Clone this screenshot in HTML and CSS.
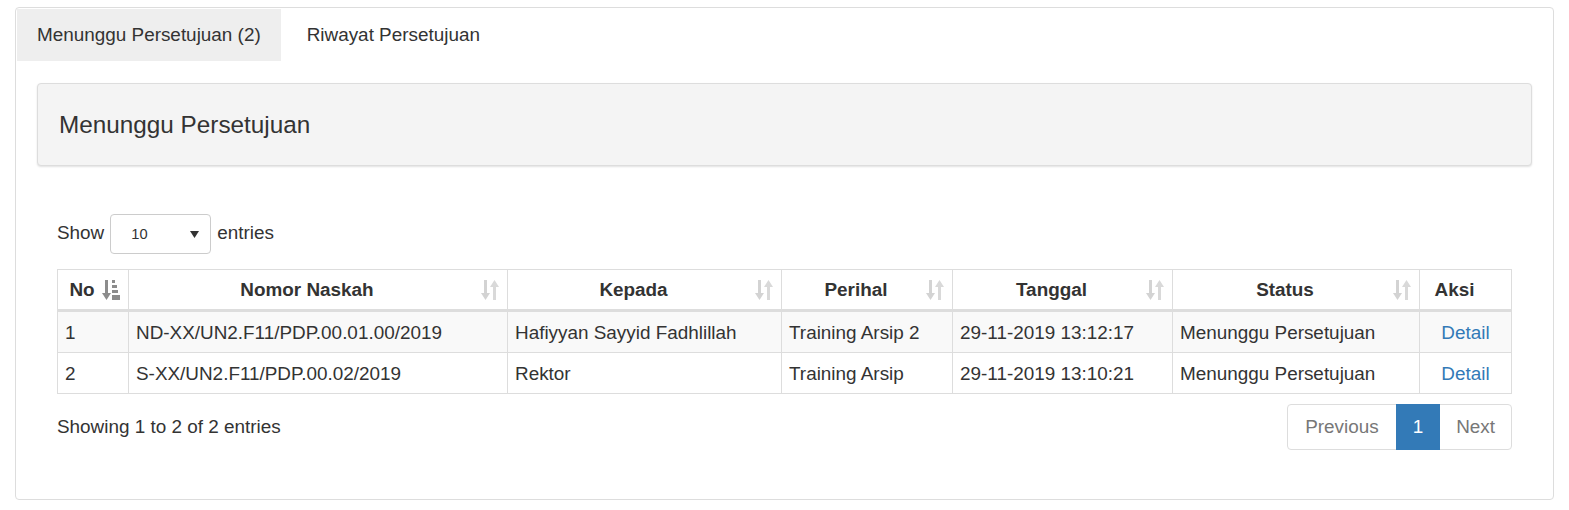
FILE: index.html
```html
<!DOCTYPE html>
<html lang="id">
<head>
<meta charset="utf-8">
<title>Menunggu Persetujuan</title>
<link rel="stylesheet" href="styles.css">
</head>
<body>
<div class="card">
  <div class="tabs">
    <div class="tab active">Menunggu Persetujuan (2)</div>
    <div class="tab">Riwayat Persetujuan</div>
  </div>
  <div class="tab-content">
    <div class="panel-heading">Menunggu Persetujuan</div>
    <div class="dt">
      <div class="length">
        <span>Show</span>
        <div class="select"><span class="select-val">10</span><svg class="caret" width="9" height="7" viewBox="0 0 9 7"><path d="M0 0H9L4.5 7Z" fill="#333"/></svg></div>
        <span>entries</span>
      </div>
      <table class="grid">
        <colgroup>
          <col class="c-no"><col class="c-nomor"><col class="c-kepada"><col class="c-perihal"><col class="c-tanggal"><col class="c-status"><col class="c-aksi">
        </colgroup>
        <thead>
          <tr>
            <th><div class="th-in"><span class="lbl">No</span><svg class="sort-icon" width="18" height="20" viewBox="0 0 18 20"><rect x="3" y="0" width="3" height="14" fill="#8c8c8c"/><path d="M0 13H9L4.5 20Z" fill="#8c8c8c"/><rect x="10" y="0" width="3" height="3" fill="#8c8c8c"/><rect x="10" y="5" width="5" height="3" fill="#8c8c8c"/><rect x="10" y="10" width="6" height="3" fill="#8c8c8c"/><rect x="10" y="15" width="8" height="5" fill="#8c8c8c"/></svg></div></th>
            <th><div class="th-in"><span class="lbl">Nomor Naskah</span><svg class="sort-icon" width="18" height="20" viewBox="0 0 18 20"><rect x="3" y="0" width="3" height="14" fill="#d3d3d3"/><path d="M0 13H9L4.5 20Z" fill="#d3d3d3"/><path d="M9 7H18L13.5 0Z" fill="#d9d9d9"/><rect x="12" y="6" width="3" height="14" fill="#d9d9d9"/></svg></div></th>
            <th><div class="th-in"><span class="lbl">Kepada</span><svg class="sort-icon" width="18" height="20" viewBox="0 0 18 20"><rect x="3" y="0" width="3" height="14" fill="#d3d3d3"/><path d="M0 13H9L4.5 20Z" fill="#d3d3d3"/><path d="M9 7H18L13.5 0Z" fill="#d9d9d9"/><rect x="12" y="6" width="3" height="14" fill="#d9d9d9"/></svg></div></th>
            <th><div class="th-in"><span class="lbl">Perihal</span><svg class="sort-icon" width="18" height="20" viewBox="0 0 18 20"><rect x="3" y="0" width="3" height="14" fill="#d3d3d3"/><path d="M0 13H9L4.5 20Z" fill="#d3d3d3"/><path d="M9 7H18L13.5 0Z" fill="#d9d9d9"/><rect x="12" y="6" width="3" height="14" fill="#d9d9d9"/></svg></div></th>
            <th><div class="th-in"><span class="lbl">Tanggal</span><svg class="sort-icon" width="18" height="20" viewBox="0 0 18 20"><rect x="3" y="0" width="3" height="14" fill="#d3d3d3"/><path d="M0 13H9L4.5 20Z" fill="#d3d3d3"/><path d="M9 7H18L13.5 0Z" fill="#d9d9d9"/><rect x="12" y="6" width="3" height="14" fill="#d9d9d9"/></svg></div></th>
            <th><div class="th-in"><span class="lbl">Status</span><svg class="sort-icon" width="18" height="20" viewBox="0 0 18 20"><rect x="3" y="0" width="3" height="14" fill="#d3d3d3"/><path d="M0 13H9L4.5 20Z" fill="#d3d3d3"/><path d="M9 7H18L13.5 0Z" fill="#d9d9d9"/><rect x="12" y="6" width="3" height="14" fill="#d9d9d9"/></svg></div></th>
            <th class="nosort"><div class="th-in"><span class="lbl">Aksi</span></div></th>
          </tr>
        </thead>
        <tbody>
          <tr class="odd">
            <td>1</td>
            <td>ND-XX/UN2.F11/PDP.00.01.00/2019</td>
            <td>Hafiyyan Sayyid Fadhlillah</td>
            <td>Training Arsip 2</td>
            <td>29-11-2019 13:12:17</td>
            <td>Menunggu Persetujuan</td>
            <td class="act"><a href="#">Detail</a></td>
          </tr>
          <tr>
            <td>2</td>
            <td>S-XX/UN2.F11/PDP.00.02/2019</td>
            <td>Rektor</td>
            <td>Training Arsip</td>
            <td>29-11-2019 13:10:21</td>
            <td>Menunggu Persetujuan</td>
            <td class="act"><a href="#">Detail</a></td>
          </tr>
        </tbody>
      </table>
      <div class="footer">
        <div class="info">Showing 1 to 2 of 2 entries</div>
        <div class="pager">
          <span class="pg disabled first">Previous</span>
          <span class="pg current">1</span>
          <span class="pg disabled last">Next</span>
        </div>
      </div>
    </div>
  </div>
</div>
</body>
</html>
```

FILE: styles.css
```css
* { box-sizing: border-box; }
html, body { margin: 0; padding: 0; background: #fff; }
body {
  font-family: "Liberation Sans", Arial, sans-serif;
  font-size: 18.9px;
  color: #333;
}
.card {
  margin: 7px 15px 0 15px;
  border: 1px solid #ddd;
  border-radius: 4px;
  padding: 1px;
  height: 493px;
}
.tabs { display: flex; gap: 6px; }
.tab {
  height: 52px;
  line-height: 52px;
  padding: 0 20px;
  color: #333;
}
.tab.active { background: #eee; }
.tab-content { padding: 22px 20px 0 20px; }
.panel-heading {
  height: 83px;
  display: flex;
  align-items: center;
  padding-left: 21px;
  font-size: 24.3px;
  background: #f4f4f4;
  border: 1px solid #ddd;
  border-radius: 4px;
  box-shadow: 0 1px 2px rgba(0,0,0,0.12);
}
.dt { padding: 47px 20px 0 20px; }
.length { display: flex; align-items: center; gap: 6px; height: 40px; }
.select {
  width: 101px;
  height: 40px;
  border: 1px solid #ccc;
  border-radius: 4px;
  display: flex;
  align-items: center;
  justify-content: space-between;
  padding: 0 11px 0 20px;
  font-size: 14.67px;
  margin-top: 2px;
}
.caret { display: block; margin-top: 1px; }
.grid {
  margin-top: 16px;
  width: 100%;
  table-layout: fixed;
  border-collapse: separate;
  border-spacing: 0;
  border-top: 1px solid #ddd;
  border-left: 1px solid #ddd;
}
.c-no { width: 71px; }
.c-nomor { width: 379px; }
.c-kepada { width: 274px; }
.c-perihal { width: 171px; }
.c-tanggal { width: 220px; }
.c-status { width: 247px; }
.c-aksi { width: 92px; }
.grid th, .grid td {
  border-right: 1px solid #ddd;
  border-bottom: 1px solid #ddd;
  padding: 9px 7px 8px 7px;
  line-height: 23px;
  text-align: left;
  white-space: nowrap;
}
.grid th { font-weight: bold; border-bottom-width: 3px; padding: 8px 8px; }
.th-in { display: flex; align-items: center; }
.lbl { flex: 1; text-align: center; }
.sort-icon { display: block; margin-left: 4px; flex: none; }
.nosort .th-in { padding-right: 22px; }
.grid tr.odd td { background: #f9f9f9; }
.grid td.act { text-align: center; }
.grid a { color: #337ab7; text-decoration: none; }
.footer {
  display: flex;
  justify-content: space-between;
  align-items: center;
  margin-top: 10px;
}
.pager { display: flex; }
.pg {
  height: 46px;
  line-height: 44px;
  padding: 0 16px;
  border: 1px solid #ddd;
  margin-left: -1px;
  color: #777;
  background: #fff;
}
.pg.first { border-radius: 4px 0 0 4px; margin-left: 0; padding: 0 17px 0 17px; }
.pg.last { border-radius: 0 4px 4px 0; }
.pg.current { background: #337ab7; border-color: #337ab7; color: #fff; position: relative; }
```
